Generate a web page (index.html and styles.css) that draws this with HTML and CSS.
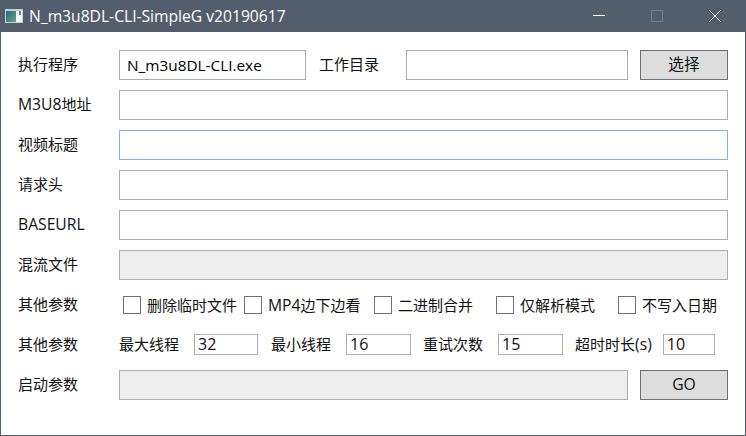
FILE: index.html
```html
<!DOCTYPE html>
<html lang="zh-CN">
<head>
<meta charset="utf-8">
<title>N_m3u8DL-CLI-SimpleG v20190617</title>
<link rel="stylesheet" href="styles.css">
</head>
<body>
<div class="window">
  <header class="titlebar">
    <svg class="app-icon" width="18" height="14" viewBox="0 0 18 14">
      <defs>
        <linearGradient id="pane" x1="0" y1="0" x2="1" y2="1">
          <stop offset="0" stop-color="#2b6a86"/>
          <stop offset="1" stop-color="#5aa67c"/>
        </linearGradient>
      </defs>
      <rect x="0" y="0" width="18" height="14" fill="#c9ced3"/>
      <rect x="1" y="2" width="16" height="11" fill="#f4f5f6"/>
      <rect x="1" y="2" width="10" height="11" fill="url(#pane)"/>
      <rect x="14" y="2" width="2" height="4" fill="#4f8f9c"/>
    </svg>
    <span class="title">N_m3u8DL-CLI-SimpleG v20190617</span>
    <div class="controls">
      <svg class="ctl" width="58" height="32" viewBox="0 0 58 32"><path d="M23 15.5H35" stroke="#fff" stroke-width="1"/></svg>
      <svg class="ctl" width="58" height="32" viewBox="0 0 58 32"><rect x="23.5" y="10.5" width="11" height="11" fill="none" stroke="#737c88"/></svg>
      <svg class="ctl" width="58" height="32" viewBox="0 0 58 32"><path d="M23 10L35 22M35 10L23 22" stroke="#fff" stroke-width="1"/></svg>
    </div>
  </header>
  <main class="form">
    <div class="row">
      <label class="lbl">执行程序</label>
      <input class="field w-exe" value="N_m3u8DL-CLI.exe">
      <label class="lbl lbl-dir">工作目录</label>
      <input class="field w-dir">
      <button class="btn">选择</button>
    </div>
    <div class="row"><label class="lbl"><span class="lat">M3U8</span>地址</label><input class="field grow"></div>
    <div class="row"><label class="lbl">视频标题</label><input class="field grow focus"></div>
    <div class="row"><label class="lbl">请求头</label><input class="field grow"></div>
    <div class="row"><label class="lbl"><span class="lat">BASEURL</span></label><input class="field grow"></div>
    <div class="row"><label class="lbl">混流文件</label><input class="field grow off" disabled></div>
    <div class="row row-check">
      <label class="lbl">其他参数</label>
      <div class="checks">
        <span class="check c1"><i class="box"></i><span class="ctext">删除临时文件</span></span>
        <span class="check c2"><i class="box"></i><span class="ctext"><span class="lat">MP4</span>边下边看</span></span>
        <span class="check c3"><i class="box"></i><span class="ctext">二进制合并</span></span>
        <span class="check c4"><i class="box"></i><span class="ctext">仅解析模式</span></span>
        <span class="check"><i class="box"></i><span class="ctext">不写入日期</span></span>
      </div>
    </div>
    <div class="row row-num">
      <label class="lbl">其他参数</label>
      <span class="nlbl">最大线程</span><input class="num n1" value="32">
      <span class="nlbl">最小线程</span><input class="num n2" value="16">
      <span class="nlbl">重试次数</span><input class="num n3" value="15">
      <span class="nlbl">超时时长<span class="lat">(s)</span></span><input class="num n4" value="10">
    </div>
    <div class="row">
      <label class="lbl">启动参数</label>
      <input class="field off w-args" disabled>
      <button class="btn btn-go">GO</button>
    </div>
  </main>
</div>
</body>
</html>
```
FILE: styles.css
```css
* { box-sizing: border-box; }
html, body { margin: 0; padding: 0; }
body {
  width: 746px;
  height: 436px;
  overflow: hidden;
  background: #fff;
  font-family: "Open Sans", "Noto Sans CJK SC", sans-serif;
  font-size: 15px;
  color: #111;
}
.window {
  width: 746px;
  height: 436px;
  border: 1px solid #545f6d;
  border-top: 0;
  display: flex;
  flex-direction: column;
}
.titlebar {
  height: 32px;
  flex: none;
  margin: 0 -1px;
  background: #535e6c;
  display: flex;
  align-items: center;
  padding-left: 5px;
  color: #fff;
}
.app-icon { flex: none; margin-right: 6px; }
.title { font-size: 15.65px; }
.controls { margin-left: auto; margin-right: 2px; display: flex; }
.ctl { display: block; }
.form {
  padding: 18px 17px 0;
  display: flex;
  flex-direction: column;
  gap: 10px;
}
.row { display: flex; align-items: center; height: 30px; }
.lbl { width: 101px; flex: none; line-height: 20px; padding-bottom: 2px; }
.lat { font-size: 15.7px; }
.field {
  height: 30px;
  border: 1px solid #abadb3;
  background: #fff;
  padding: 0 7px 1px;
  font: inherit;
  font-size: 15.35px;
  color: #000;
  outline: none;
  border-radius: 0;
  min-width: 0;
}
.grow { flex: 1; }
.focus { border-color: #7eb4ea; }
.off { background: #eee; border-color: #adadad; }
.w-exe { width: 187px; }
.lbl-dir { width: 87px; margin-left: 13px; }
.w-dir { width: 222px; }
.w-args { width: 509px; }
.btn {
  width: 88px;
  height: 30px;
  margin-left: 12px;
  border: 1px solid #707070;
  background: #ddd;
  font: inherit;
  font-size: 15.7px;
  color: #111;
  padding: 0 0 4px;
  border-radius: 0;
}
.btn-go { padding-bottom: 2px; }
.row-check { height: 18px; margin-top: 6px; }
.checks { display: flex; padding-left: 4px; flex: 1; }
.check { display: flex; align-items: center; white-space: nowrap; line-height: 18px; width: 121px; }
.ctext { padding-bottom: 1px; }
.c1 { width: 121px; }
.c2 { width: 130px; }
.c3 { width: 122px; }
.c4 { width: 122px; }
.box {
  width: 18px;
  height: 18px;
  border: 1px solid #707070;
  background: #fff;
  margin-right: 6px;
  flex: none;
}
.row-num { height: 21px; margin-top: 10px; margin-bottom: 5px; }
.nlbl { flex: none; white-space: nowrap; padding-bottom: 2px; }
.num {
  height: 21px;
  border: 1px solid #abadb3;
  padding: 0 3px 2px;
  font: inherit;
  font-size: 16px;
  color: #111;
  border-radius: 0;
  outline: none;
  min-width: 0;
  flex: none;
}
.n1 { width: 64px; margin-left: 15px; margin-right: 13px; }
.n2 { width: 65px; margin-left: 15px; margin-right: 12px; }
.n3 { width: 65px; margin-left: 15px; margin-right: 12px; }
.n4 { width: 52px; margin-left: 11px; }
```
